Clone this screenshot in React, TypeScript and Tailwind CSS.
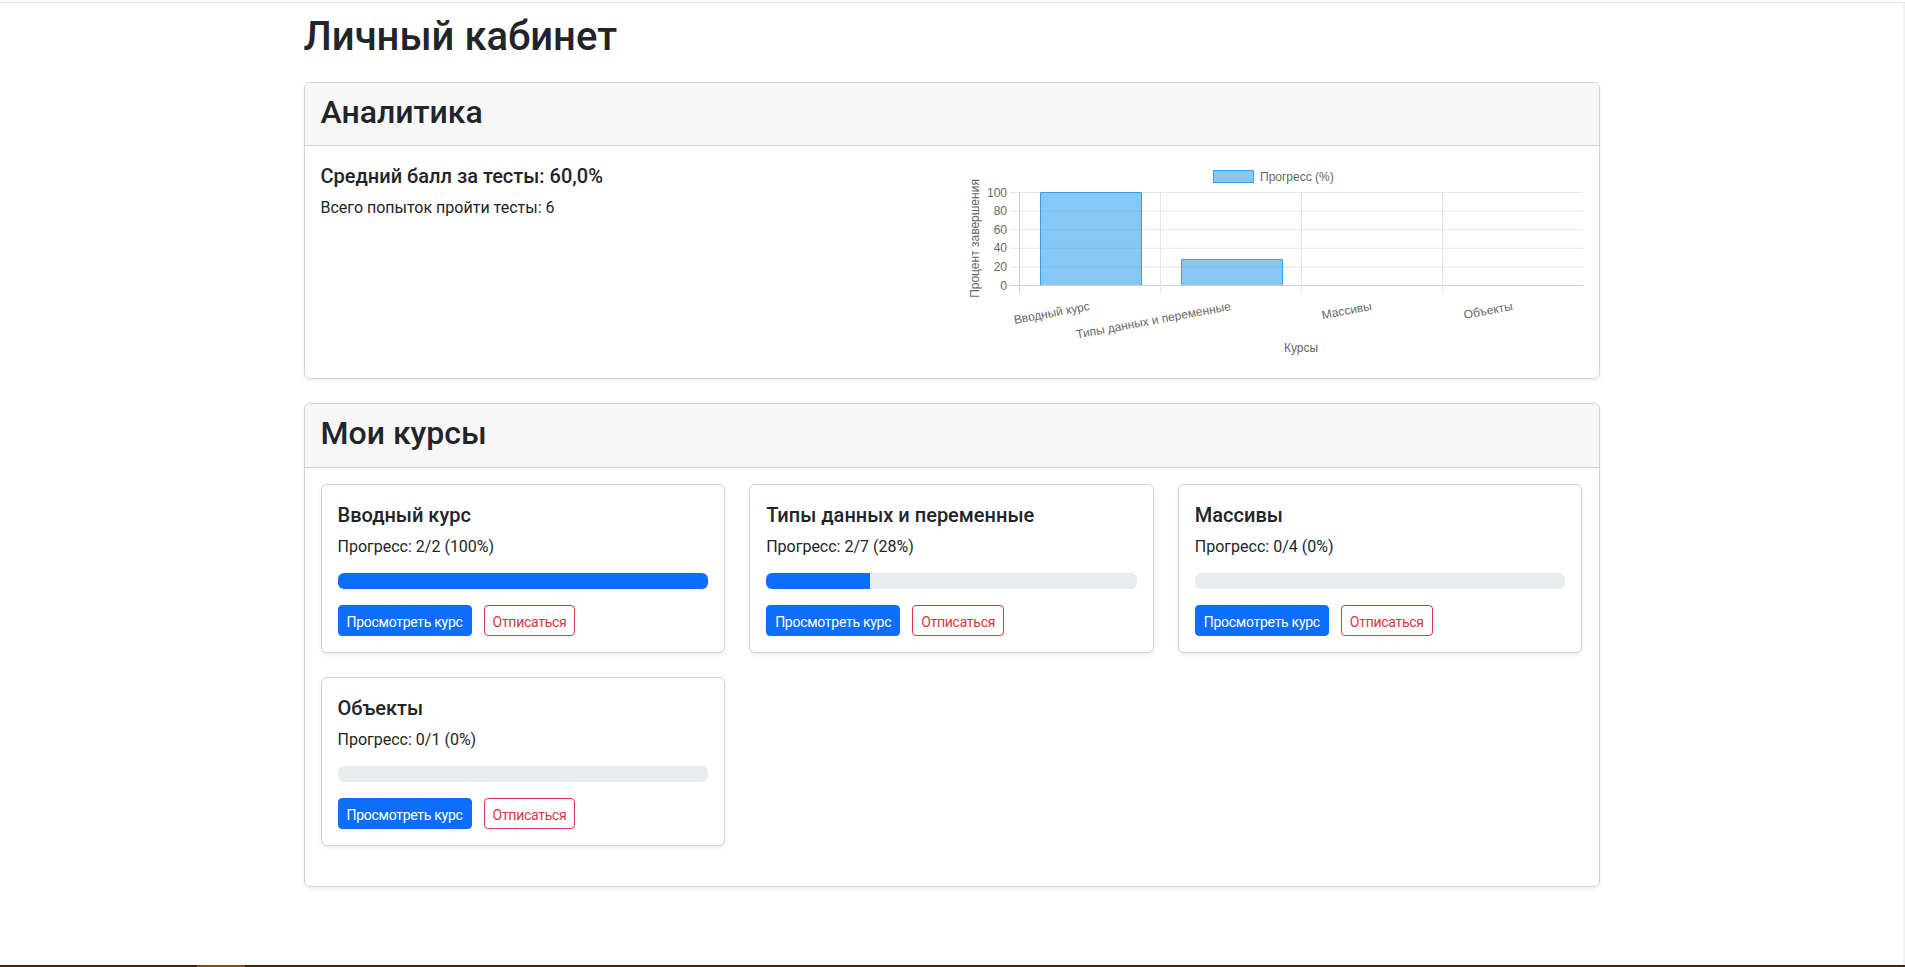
import React from 'react';

interface Course {
  title: string;
  done: number;
  total: number;
}

const courses: Course[] = [
  { title: 'Вводный курс', done: 2, total: 2 },
  { title: 'Типы данных и переменные', done: 2, total: 7 },
  { title: 'Массивы', done: 0, total: 4 },
  { title: 'Объекты', done: 0, total: 1 },
];

const pct = (c: Course) => Math.floor((c.done / c.total) * 100);

// chart drawn in canvas-like pixel coords (620x200)
const ProgressChart: React.FC = () => {
  const left = 55;
  const right = 619;
  const top = 30;
  const bottom = 123;
  const step = (right - left) / courses.length;
  const ticks = [0, 20, 40, 60, 80, 100];
  const yOf = (v: number) => bottom - ((bottom - top) * v) / 100;

  return (
    <svg width="620" height="200" viewBox="0 0 620 200" className="block" style={{ fontFamily: '"Liberation Sans", Arial, sans-serif' }}>
      {/* legend */}
      <rect x="249.5" y="8.5" width="40" height="12" fill="rgba(54,162,235,0.6)" stroke="rgb(54,162,235)" />
      <text x="296" y="18.5" fontSize="12" fill="#666">Прогресс (%)</text>

      {/* horizontal grid */}
      {ticks.map((t) => (
        <g key={t}>
          <line x1={left - 9} x2={right} y1={yOf(t) + 0.5} y2={yOf(t) + 0.5} stroke={t === 0 ? '#cfcfcf' : '#e5e5e5'} />
          <text x={left - 12} y={yOf(t) + 4.5} fontSize="12" fill="#666" textAnchor="end">{t}</text>
        </g>
      ))}

      {/* vertical grid */}
      {courses.map((_, i) => (
        <line key={i} x1={left + step * i + 0.5} x2={left + step * i + 0.5} y1={top} y2={bottom + 8} stroke={i === 0 ? '#cfcfcf' : '#e5e5e5'} />
      ))}

      {/* bars */}
      {courses.map((c, i) => {
        const p = pct(c);
        if (p === 0) return null;
        const x = left + step * i + 21.5;
        const w = 101;
        const y = yOf(p) + 0.5;
        return (
          <g key={c.title}>
            <rect x={x} y={y} width={w} height={bottom - y} fill="rgba(54,162,235,0.6)" />
            <path d={`M${x} ${bottom} V${y} H${x + w} V${bottom}`} fill="none" stroke="rgb(54,162,235)" />
          </g>
        );
      })}

      {/* x labels */}
      {courses.map((c, i) => {
        const cx = left + step * i + step / 2;
        return (
          <text key={c.title} x={cx} y={144} fontSize="12" fill="#666" textAnchor="end" dominantBaseline="central" transform={`rotate(-10.5 ${cx} 144)`}>
            {c.title}
          </text>
        );
      })}

      <text x="11" y="76.5" fontSize="12" fill="#666" textAnchor="middle" dominantBaseline="central" transform="rotate(-90 11 76.5)">
        Процент завершения
      </text>
      <text x="337" y="190" fontSize="12" fill="#666" textAnchor="middle">Курсы</text>
    </svg>
  );
};

const CourseCard: React.FC<{ course: Course }> = ({ course }) => {
  const p = pct(course);
  return (
    <div className="bg-white border border-[#d2d2d2] rounded-[6px] shadow-[0_2px_4px_rgba(0,0,0,0.075)] p-4">
      <h5 className="text-[20px] leading-[1.2] font-medium pt-[2px] mb-[6px]">{course.title}</h5>
      <p className="leading-6 pt-[2px] mb-[14px]">
        Прогресс: {course.done}/{course.total} ({p}%)
      </p>
      <div className="h-4 rounded-[6px] bg-[#e9ecef] overflow-hidden mb-4">
        <div className="h-full bg-[#0d6efd]" style={{ width: `${p}%` }} />
      </div>
      <div className="flex gap-3">
        <button className="px-2 pt-[6px] pb-[2px] text-[14px] leading-[21px] tracking-[-0.02em] rounded-[4px] bg-[#0d6efd] border border-[#0d6efd] text-white">
          Просмотреть курс
        </button>
        <button className="px-2 pt-[6px] pb-[2px] text-[14px] leading-[21px] tracking-[-0.02em] rounded-[4px] bg-white border border-[#dc3545] text-[#dc3545]">
          Отписаться
        </button>
      </div>
    </div>
  );
};

const App: React.FC = () => {
  return (
    <div className="min-h-screen flex flex-col bg-white text-[#212529] text-base font-['Roboto','Noto_Sans',sans-serif]">
      <div className="h-[3px] border-b border-[#e3e3e3]" />
      <main className="flex-1 border-r-2 border-[#efefef]">
        <div className="max-w-[1320px] mx-auto px-3 pt-[7px] pb-8">
          <h1 className="text-[40px] leading-[1.2] font-medium pt-[3px] mb-[21px]">Личный кабинет</h1>

          <div className="border border-[#d2d2d2] rounded-[6px] shadow-[0_2px_4px_rgba(0,0,0,0.075)] mb-6">
            <div className="bg-[#f7f7f7] border-b border-[#d2d2d2] rounded-t-[6px] px-4 py-2">
              <h2 className="text-[32px] leading-[1.2] font-medium pt-[2px] mb-[6px]">Аналитика</h2>
            </div>
            <div className="p-4 grid grid-cols-2 gap-6">
              <div>
                <h5 className="text-[20px] leading-[1.2] font-medium pt-[2px] mb-[6px]">Средний балл за тесты: 60,0%</h5>
                <p className="leading-6 pt-[2px]">Всего попыток пройти тесты: 6</p>
              </div>
              <div>
                <ProgressChart />
              </div>
            </div>
          </div>

          <div className="border border-[#d2d2d2] rounded-[6px] shadow-[0_2px_4px_rgba(0,0,0,0.075)]">
            <div className="bg-[#f7f7f7] border-b border-[#d2d2d2] rounded-t-[6px] px-4 py-2">
              <h2 className="text-[32px] leading-[1.2] font-medium pt-[2px] mb-[6px]">Мои курсы</h2>
            </div>
            <div className="p-4">
              <div className="grid grid-cols-3 gap-6 mb-6">
                {courses.map((c) => (
                  <CourseCard key={c.title} course={c} />
                ))}
              </div>
            </div>
          </div>
        </div>
      </main>
      <div className="h-[2px] bg-[#3e2409] flex">
        <div className="ml-[197px] w-[48px] bg-[#8a4a12]" />
      </div>
    </div>
  );
};

export default App;
